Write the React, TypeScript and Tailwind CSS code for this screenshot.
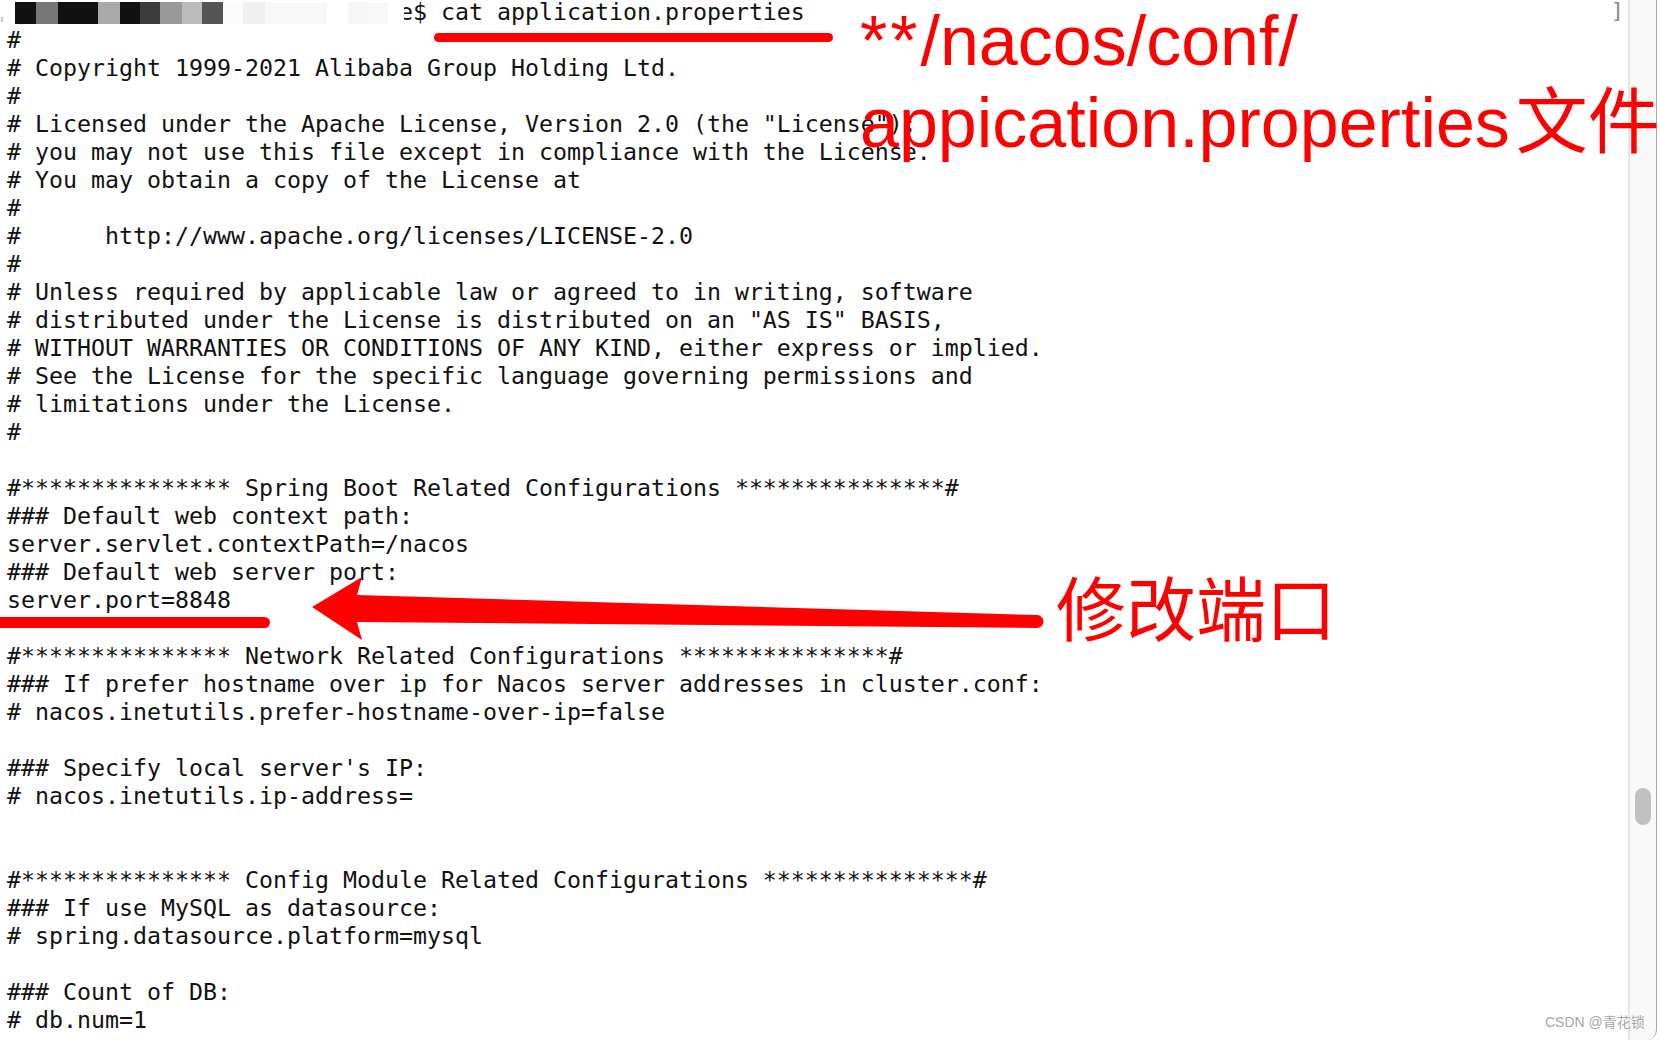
import React from "react";

const lines: string[] = [
  "                            e$ cat application.properties",
  "#",
  "# Copyright 1999-2021 Alibaba Group Holding Ltd.",
  "#",
  '# Licensed under the Apache License, Version 2.0 (the "License");',
  "# you may not use this file except in compliance with the License.",
  "# You may obtain a copy of the License at",
  "#",
  "#      http://www.apache.org/licenses/LICENSE-2.0",
  "#",
  "# Unless required by applicable law or agreed to in writing, software",
  '# distributed under the License is distributed on an "AS IS" BASIS,',
  "# WITHOUT WARRANTIES OR CONDITIONS OF ANY KIND, either express or implied.",
  "# See the License for the specific language governing permissions and",
  "# limitations under the License.",
  "#",
  "",
  "#*************** Spring Boot Related Configurations ***************#",
  "### Default web context path:",
  "server.servlet.contextPath=/nacos",
  "### Default web server port:",
  "server.port=8848",
  "",
  "#*************** Network Related Configurations ***************#",
  "### If prefer hostname over ip for Nacos server addresses in cluster.conf:",
  "# nacos.inetutils.prefer-hostname-over-ip=false",
  "",
  "### Specify local server's IP:",
  "# nacos.inetutils.ip-address=",
  "",
  "",
  "#*************** Config Module Related Configurations ***************#",
  "### If use MySQL as datasource:",
  "# spring.datasource.platform=mysql",
  "",
  "### Count of DB:",
  "# db.num=1",
];

const mosaic: { w: number; c: string }[] = [
  { w: 21, c: "#111111" },
  { w: 22, c: "#777777" },
  { w: 40, c: "#111111" },
  { w: 22, c: "#aaaaaa" },
  { w: 20, c: "#111111" },
  { w: 20, c: "#3c3c3c" },
  { w: 22, c: "#999999" },
  { w: 20, c: "#bbbbbb" },
  { w: 21, c: "#555555" },
  { w: 20, c: "#fcfcfc" },
  { w: 22, c: "#f0f0f0" },
  { w: 62, c: "#f8f8f8" },
  { w: 21, c: "#ffffff" },
  { w: 20, c: "#f6f6f6" },
  { w: 20, c: "#f8f8f8" },
  { w: 16, c: "#ffffff" },
];

export default function App() {
  return (
    <div className="relative w-[1660px] h-[1040px] overflow-hidden bg-white">
      <div className="flex h-full">
        {/* terminal text */}
        <div className="relative flex-1 overflow-hidden">
          <div
            className="mt-[-2px] pl-[7px] text-[23.25px] leading-[28px] text-[#111111] whitespace-pre"
            style={{ fontFamily: '"DejaVu Sans Mono", monospace' }}
          >
            {lines.map((l, i) => (
              <div key={i} className="h-[28px]">
                {l === "" ? " " : l}
              </div>
            ))}
          </div>
          {/* redaction mosaic over the prompt */}
          <div className="absolute left-[15px] top-[2px] flex h-[22px]">
            {mosaic.map((m, i) => (
              <div key={i} className="h-full" style={{ width: m.w, backgroundColor: m.c }} />
            ))}
          </div>
          <div className="absolute left-[1px] top-[17px] h-[5px] w-[2px] bg-[#c8c8c8]" />
          <div
            className="absolute right-[4px] top-[-3px] text-[22px] leading-[28px] text-[#8a8a8a]"
            style={{ fontFamily: '"DejaVu Sans Mono", monospace' }}
          >
            ]
          </div>
          {/* window corner bottom-left */}
          <div className="absolute left-[-10px] top-[1020px] h-[40px] w-[26px] rounded-bl-[16px] border-b border-l border-[#c4c4c4]" />
        </div>
        {/* scrollbar */}
        <div className="flex h-full w-[32px] shrink-0">
          <div className="w-[2px] bg-[#e6e6e6]" />
          <div className="flex w-[27px] justify-center bg-[#f9f9f9] rounded-br-[10px] border-r border-[#a8a8a8]">
            <div className="mt-[788px] h-[37px] w-[16px] rounded-full bg-[#c1c1c1]" />
          </div>
          <div className="w-[3px] bg-white" />
        </div>
      </div>

      {/* red annotations */}
      <svg
        className="pointer-events-none absolute left-0 top-0"
        width={1660}
        height={1040}
        viewBox="0 0 1660 1040"
      >
        <rect x={434} y={33} width={399} height={9} rx={4.5} fill="#ff0000" />
        <rect x={-6} y={617} width={276} height={11} rx={5.5} fill="#ff0000" />
        <path
          d="M312,607 L362,577 L357,595 L1037,615 A6.5,6.5 0 0 1 1037,628 L357,622 L362,640 Z"
          fill="#ff0000"
        />
      </svg>

      <div
        className="absolute left-[860px] top-0 text-[70px] leading-[82px] text-[#ff0000] whitespace-nowrap"
        style={{ fontFamily: '"Liberation Sans", "Noto Sans CJK SC", sans-serif' }}
      >
        <div className="h-[82px]">
          <span className="tracking-[3px]">**</span>/nacos/conf/
        </div>
        <div className="h-[82px]">
          appication.properties
          <span
            className="ml-[6px] text-[72px] leading-[40px]"
            style={{ fontFamily: '"Noto Sans CJK SC", sans-serif' }}
          >
            文件
          </span>
        </div>
      </div>

      <div
        className="absolute left-[1056px] top-[571px] text-[70px] leading-[70px] text-[#ff0000] whitespace-nowrap"
        style={{ fontFamily: '"Noto Sans CJK SC", sans-serif' }}
      >
        修改端口
      </div>

      <div
        className="absolute left-[1545px] top-[1012px] text-[14px] leading-[20px] text-[#a6a6a6] whitespace-nowrap"
        style={{ fontFamily: '"Liberation Sans", "Noto Sans CJK SC", sans-serif' }}
      >
        CSDN @青花锁
      </div>
    </div>
  );
}
